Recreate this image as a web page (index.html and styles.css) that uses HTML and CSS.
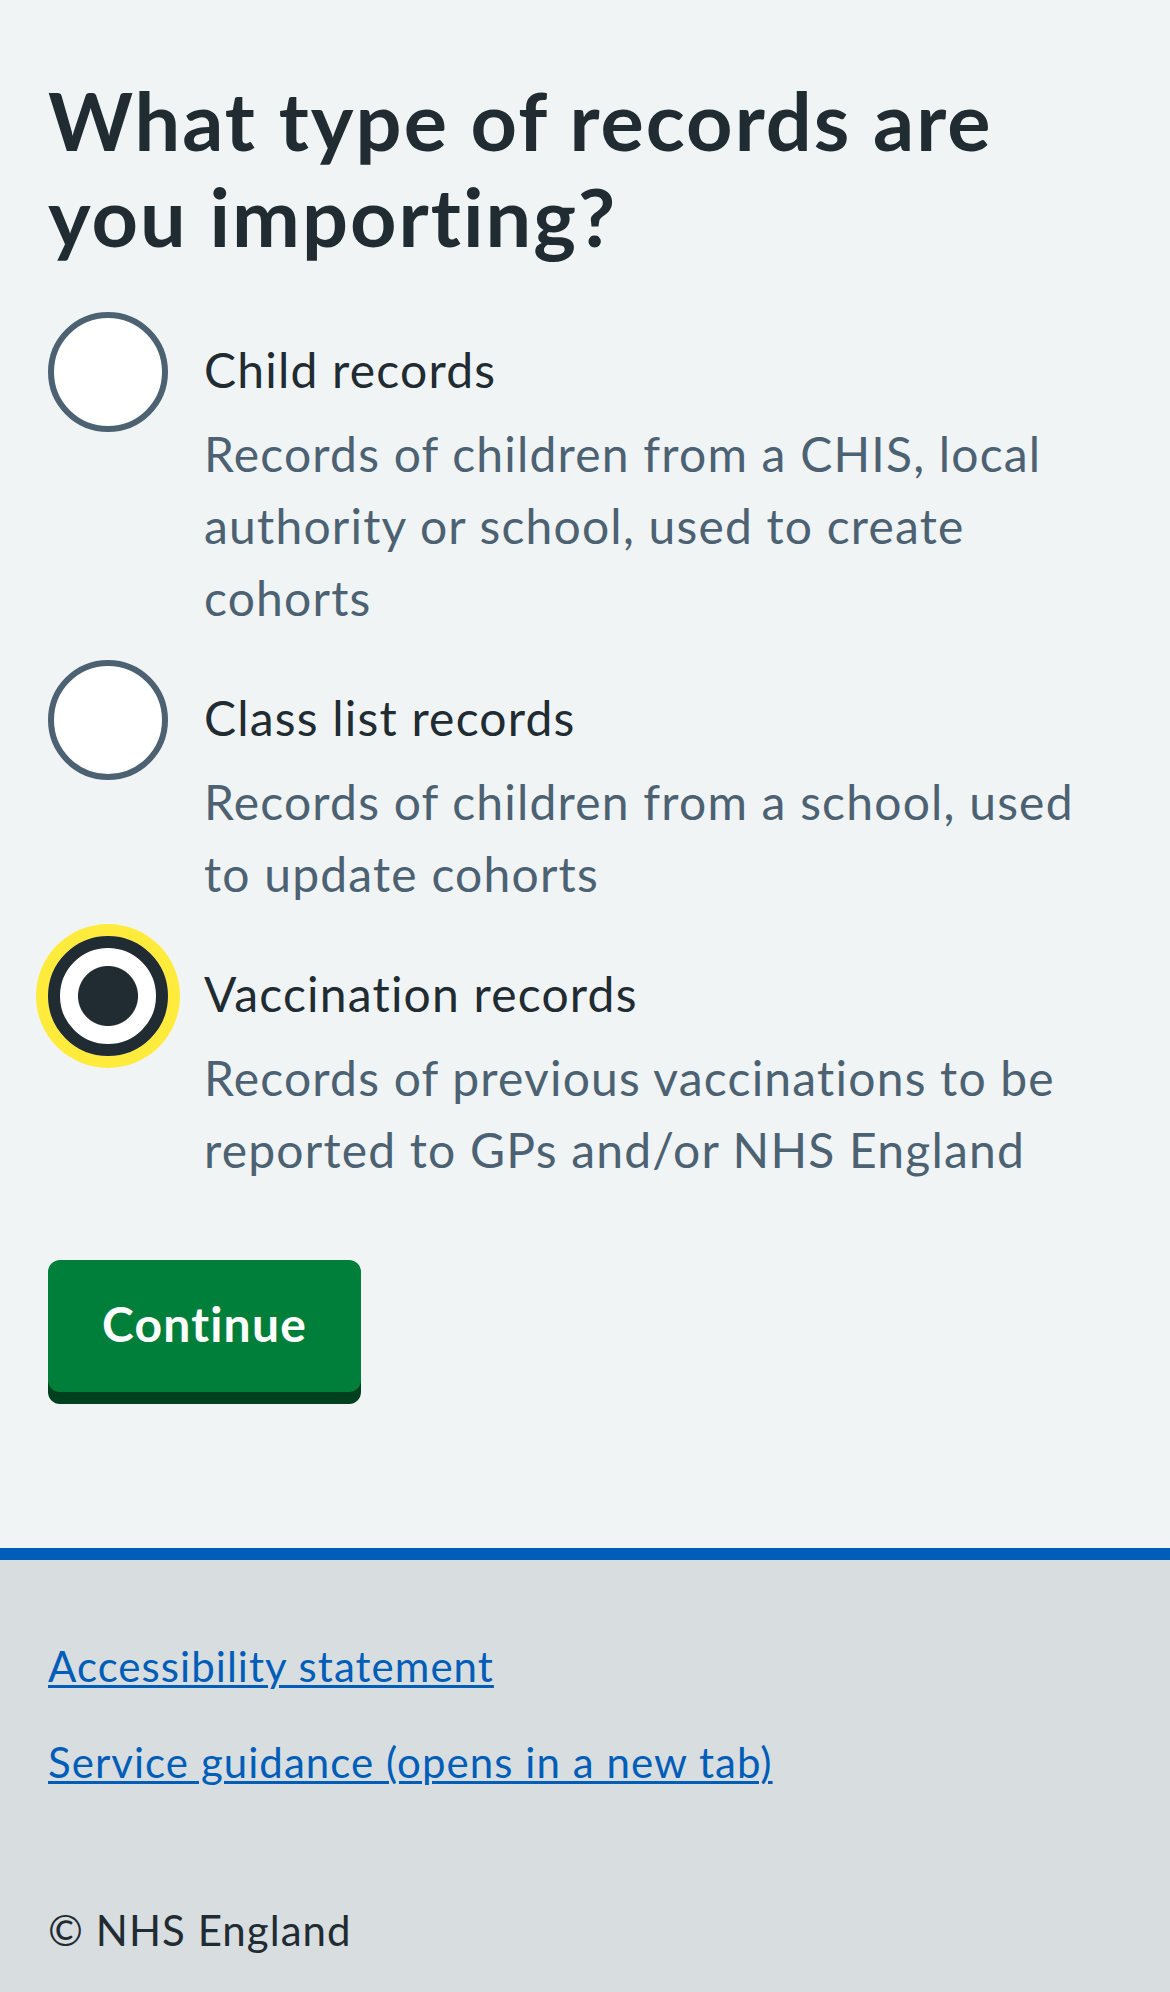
FILE: index.html
```html
<!DOCTYPE html>
<html lang="en">
<head>
<meta charset="utf-8">
<title>What type of records are you importing?</title>
<link rel="stylesheet" href="styles.css">
</head>
<body>
<main class="main">
  <form class="form">
    <div class="form-group" role="radiogroup" aria-labelledby="q">
      <h1 class="heading" id="q">What type of records are you importing?</h1>
      <div class="radios">
        <div class="radio-item">
          <input class="radio-input" type="radio" id="type-child" name="type">
          <label class="radio-label" for="type-child">Child records</label>
          <div class="radio-hint">Records of children from a CHIS, local authority or school, used to create cohorts</div>
        </div>
        <div class="radio-item">
          <input class="radio-input" type="radio" id="type-class" name="type">
          <label class="radio-label" for="type-class">Class list records</label>
          <div class="radio-hint">Records of children from a school, used to update cohorts</div>
        </div>
        <div class="radio-item">
          <input class="radio-input is-focused" type="radio" id="type-vacc" name="type" checked>
          <label class="radio-label" for="type-vacc">Vaccination records</label>
          <div class="radio-hint">Records of previous vaccinations to be reported to GPs and/or NHS England</div>
        </div>
      </div>
    </div>
    <button class="button" type="button">Continue</button>
  </form>
</main>
<footer class="footer">
  <ul class="footer-list">
    <li class="footer-item"><a class="footer-link" href="#">Accessibility statement</a></li>
    <li class="footer-item"><a class="footer-link" href="#">Service guidance (opens in a new tab)</a></li>
  </ul>
  <p class="copyright">© NHS England</p>
</footer>
</body>
</html>
```
FILE: styles.css
```css
* { box-sizing: border-box; }

html, body {
  margin: 0;
  padding: 0;
}

body {
  background: #f0f4f5;
  font-family: Lato, "Open Sans", Arial, sans-serif;
  font-variant-ligatures: no-common-ligatures;
  color: #212b32;
}

.main {
  padding: 72px 48px 72px;
}

.form {
  margin: 0;
}

.form-group {
  margin-bottom: 72px;
}

.heading {
  margin: 0 0 48px;
  font-size: 81px;
  line-height: 96px;
  font-weight: 700;
  letter-spacing: 0.025em;
  color: #212b32;
}

.radio-item {
  display: grid;
  grid-template-columns: 120px 1fr;
  margin-bottom: 24px;
}

.radio-item:last-child {
  margin-bottom: 0;
}

.radio-input {
  -webkit-appearance: none;
  appearance: none;
  margin: 0;
  grid-column: 1;
  grid-row: 1;
  width: 120px;
  height: 120px;
  border: 6px solid #4c6272;
  border-radius: 50%;
  background: #ffffff;
}

.radio-input:checked {
  border: 12px solid #212b32;
  background: radial-gradient(circle at center, #212b32 0 29.5px, #ffffff 30.5px);
}

.radio-input.is-focused {
  box-shadow: 0 0 0 12px #ffeb3b;
}

.radio-label {
  grid-column: 2;
  grid-row: 1;
  padding: 22px 36px 26px;
  font-size: 48px;
  line-height: 72px;
  letter-spacing: 0.025em;
  color: #212b32;
}

.radio-hint {
  grid-column: 2;
  grid-row: 2;
  margin-top: -14px;
  padding: 0 12px 2px 36px;
  font-size: 48px;
  line-height: 72px;
  letter-spacing: 0.025em;
  color: #4c6272;
}

.button {
  display: inline-block;
  margin: 0 0 84px;
  padding: 22px 48px 26px;
  border: 6px solid transparent;
  border-radius: 12px;
  background: #007f3b;
  box-shadow: 0 12px 0 #00401e;
  color: #ffffff;
  font-family: inherit;
  font-variant-ligatures: inherit;
  font-size: 48px;
  line-height: 72px;
  font-weight: 700;
  letter-spacing: 0.025em;
}

.footer {
  background: #d8dde0;
  border-top: 12px solid #005eb8;
  padding: 70px 48px 74px;
}

.footer-list {
  list-style: none;
  margin: 0;
  padding: 0;
}

.footer-item {
  margin: 0 0 24px;
  font-size: 42px;
  line-height: 72px;
  letter-spacing: 0.025em;
}

.footer-link {
  color: #005eb8;
  text-decoration: underline;
  text-decoration-thickness: 3px;
  text-underline-offset: 3px;
}

.copyright {
  margin: 96px 0 0;
  font-size: 42px;
  line-height: 72px;
  letter-spacing: 0.025em;
  color: #212b32;
}
```
